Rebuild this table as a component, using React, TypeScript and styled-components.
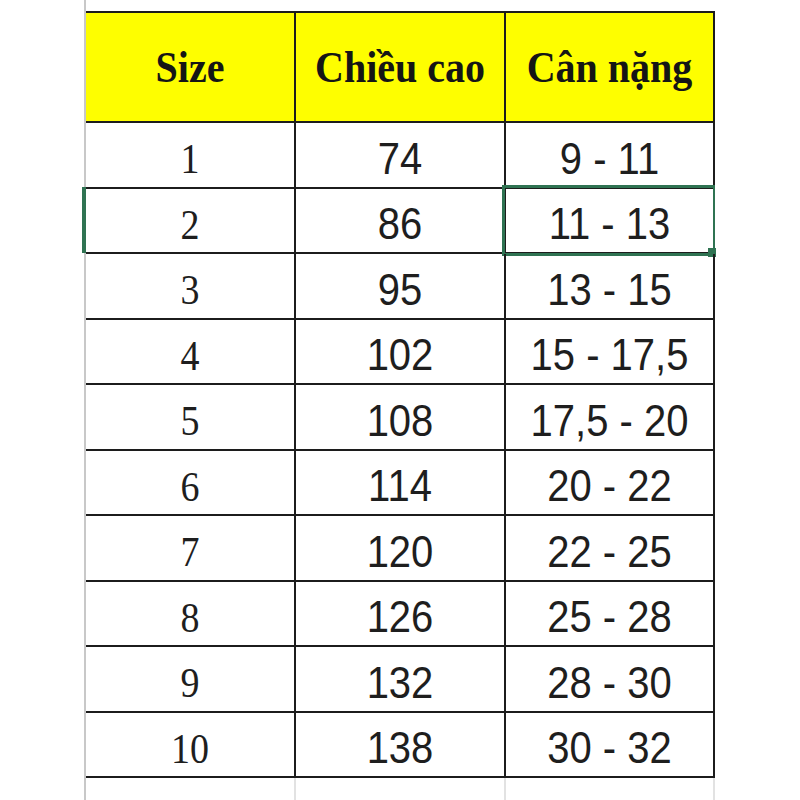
import React from "react";
import styled, { createGlobalStyle } from "styled-components";

const GlobalStyle = createGlobalStyle`
  html, body { margin: 0; padding: 0; background: #ffffff; }
  body { width: 800px; height: 800px; overflow: hidden; }
`;

const INK = "#1c1c1c";
const GREEN = "#2f7352";

const Page = styled.div`
  width: 800px;
  height: 800px;
  padding-left: 84px;
  box-sizing: border-box;
  background: #ffffff;
`;

const Sheet = styled.div`
  height: 800px;
  border-left: 2px solid #c8c8c8;
  padding-top: 11px;
  box-sizing: border-box;
  display: flex;
  flex-direction: column;
`;

const Grid = styled.div`
  display: grid;
  grid-template-columns: 210px 210px 209px;
`;

const HeaderCell = styled.div`
  height: 112px;
  box-sizing: border-box;
  background: #fefe00;
  border-top: 2px solid ${INK};
  border-bottom: 2px solid ${INK};
  border-right: 2px solid ${INK};
  display: flex;
  align-items: center;
  justify-content: center;
  font-family: "Liberation Serif", "Times New Roman", serif;
  font-weight: 700;
  font-size: 40px;
  color: #151515;
`;

const BodyCell = styled.div<{ $serif?: boolean }>`
  position: relative;
  height: 65.5px;
  box-sizing: border-box;
  border-bottom: 2px solid ${INK};
  border-right: 2px solid ${INK};
  display: flex;
  align-items: center;
  justify-content: center;
  padding-top: 9px;
  font-family: ${(p) =>
    p.$serif
      ? `"Liberation Serif", "Times New Roman", serif`
      : `"Liberation Sans", Arial, sans-serif`};
  font-size: ${(p) => (p.$serif ? "38px" : "40px")};
  color: #1e1e1e;
`;

const Label = styled.span`
  display: inline-block;
  line-height: normal;
  white-space: nowrap;
  transform: scaleY(1.1);
`;

const FillerCell = styled.div`
  height: 24px;
  border-right: 2px solid #e2e2e2;
`;

const SelectionBox = styled.div`
  position: absolute;
  top: -3.5px;
  left: -4px;
  right: -2px;
  bottom: -4px;
  border: 3px solid ${GREEN};
  border-right-width: 2px;
  pointer-events: none;
`;

const FillHandle = styled.div`
  position: absolute;
  right: -3px;
  bottom: -4px;
  width: 8px;
  height: 9px;
  background: ${GREEN};
`;

const RowMarker = styled.div`
  position: absolute;
  left: -4px;
  top: -1.5px;
  bottom: -1px;
  width: 4px;
  background: ${GREEN};
`;

const rows: [string, string, string][] = [
  ["1", "74", "9 - 11"],
  ["2", "86", "11 - 13"],
  ["3", "95", "13 - 15"],
  ["4", "102", "15 - 17,5"],
  ["5", "108", "17,5 - 20"],
  ["6", "114", "20 - 22"],
  ["7", "120", "22 - 25"],
  ["8", "126", "25 - 28"],
  ["9", "132", "28 - 30"],
  ["10", "138", "30 - 32"],
];

const SELECTED_ROW = 1;

export default function App() {
  return (
    <>
      <GlobalStyle />
      <Page>
        <Sheet>
          <Grid>
            <HeaderCell>
              <Label>Size</Label>
            </HeaderCell>
            <HeaderCell>
              <Label>Chiều cao</Label>
            </HeaderCell>
            <HeaderCell>
              <Label>Cân nặng</Label>
            </HeaderCell>
            {rows.map(([size, height, weight], i) => (
              <React.Fragment key={size}>
                <BodyCell $serif>
                  {i === SELECTED_ROW && <RowMarker />}
                  <Label>{size}</Label>
                </BodyCell>
                <BodyCell>
                  <Label>{height}</Label>
                </BodyCell>
                <BodyCell>
                  <Label>{weight}</Label>
                  {i === SELECTED_ROW && (
                    <SelectionBox>
                      <FillHandle />
                    </SelectionBox>
                  )}
                </BodyCell>
              </React.Fragment>
            ))}
            <FillerCell />
            <FillerCell />
            <FillerCell />
          </Grid>
        </Sheet>
      </Page>
    </>
  );
}
